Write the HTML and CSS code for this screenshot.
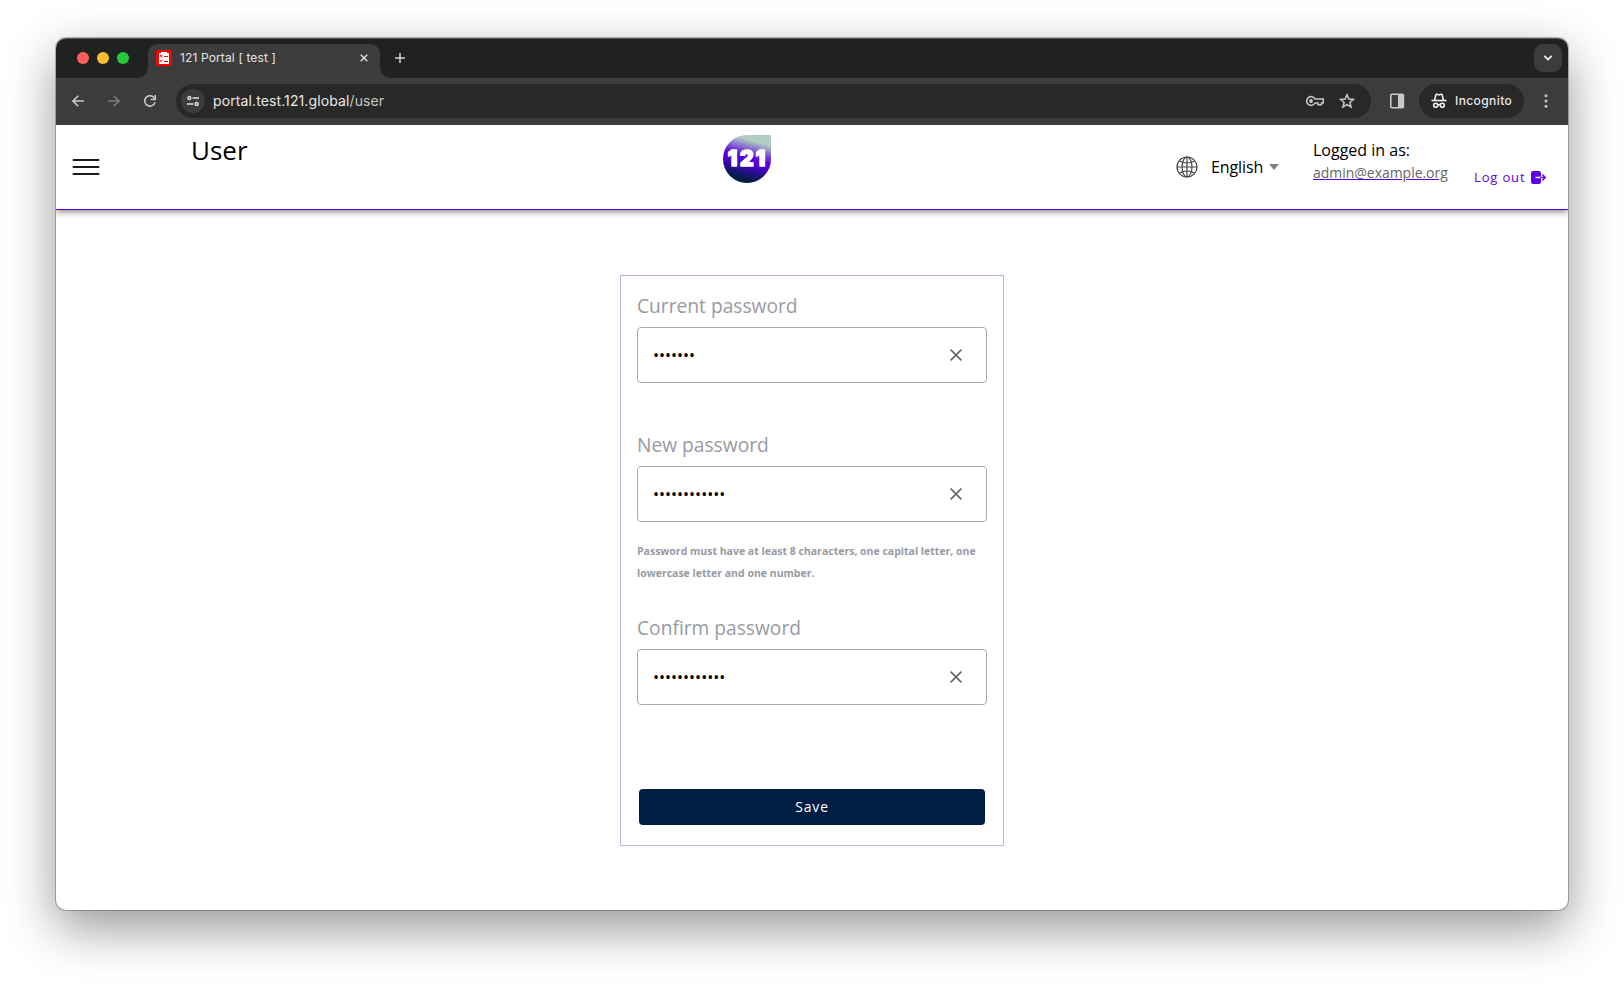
FILE: index.html
```
<!DOCTYPE html>
<html lang="en">
<head>
<meta charset="utf-8">
<title>121 Portal [ test ]</title>
<link rel="stylesheet" href="styles.css">
</head>
<body>
<div class="window">
  <div class="tabstrip">
    <div class="lights"><i class="light red"></i><i class="light yellow"></i><i class="light green"></i></div>
    <div class="tab">
      <svg class="favicon" width="16" height="16" viewBox="0 0 16 16"><rect width="16" height="16" rx="2" fill="#f80000"/><path d="M3 3h2V2h6v1h2v11H3z" fill="#fff"/><path d="M4 5l2.500 2.500M6.500 5L4 7.500M4 10l1 1.500L7 9.500M8 6.500h4M8 11.500h4" fill="none" stroke="#f80000"/></svg>
      <span class="tab-title">121 Portal [ test ]</span>
      <svg class="tab-close" width="8" height="8" viewBox="0 0 8 8"><path d="M.7.7l6.600 6.600M7.300.7L.7 7.300" stroke="#dcdcdc" stroke-width="1.500"/></svg>
    </div>
    <svg class="plus" width="10" height="10" viewBox="0 0 10 10"><path d="M5 0v10M0 5h10" stroke="#d0d0d0" stroke-width="1.500"/></svg>
    <div class="tab-search"><svg width="10" height="6" viewBox="0 0 10 6"><path d="M1.200.8L5 4.500 8.800.8" fill="none" stroke="#eee" stroke-width="1.800"/></svg></div>
  </div>
  <div class="toolbar">
    <svg class="nav" width="12" height="12" viewBox="0 0 12 12"><path d="M12 6H1M6.300.7L1 6l5.300 5.300" fill="none" stroke="#c8c8c8" stroke-width="1.600"/></svg>
    <svg class="nav" width="12" height="12" viewBox="0 0 12 12"><path d="M0 6h11M5.700.7L11 6l-5.300 5.300" fill="none" stroke="#7c7c7c" stroke-width="1.600"/></svg>
    <svg class="nav" width="12" height="12" viewBox="0 0 12 12"><path d="M11 7.200A5.200 5.200 0 1 1 9.900 2.500L11 4" fill="none" stroke="#c8c8c8" stroke-width="1.600"/><path d="M11.250 0v4.500H6.800" fill="none" stroke="#c8c8c8" stroke-width="1.600"/></svg>
    <div class="omnibox">
      <span class="site"><svg width="12" height="12" viewBox="0 0 12 12"><g fill="none" stroke="#dedede" stroke-width="1.400"><circle cx="2.300" cy="3" r="1.500"/><path d="M5.500 3H12M0 9h6.500"/><circle cx="9.700" cy="9" r="1.500"/></g></svg></span>
      <span class="url">portal.test.121.global<span class="path">/user</span></span>
      <svg class="key" width="18" height="12" viewBox="0 0 18 12"><path d="M9 4A4.400 4.400 0 1 0 9 8h3v1.800h3.500V8H17.300V4z" fill="none" stroke="#c8c8c8" stroke-width="1.500"/><circle cx="5" cy="6" r="1.900" fill="#c8c8c8"/></svg>
      <svg class="star" width="16" height="16" viewBox="0 0 16 16"><path d="M8 1.800l1.850 4.200 4.550.4-3.450 3 1.050 4.500L8 11.500l-4 2.400 1.050-4.500-3.450-3 4.550-.4z" fill="none" stroke="#c8c8c8" stroke-width="1.500"/></svg>
    </div>
    <svg class="panel" width="16" height="16" viewBox="0 0 16 16"><rect x="1.800" y="1.300" width="12.600" height="13.400" rx="1" fill="none" stroke="#c8c8c8" stroke-width="1.600"/><path d="M9 2h6v12H9z" fill="#c8c8c8"/></svg>
    <div class="incognito">
      <svg width="16" height="16" viewBox="0 0 16 16"><path d="M.5 7.500h15" stroke="#eee" stroke-width="1.600"/><path d="M3.600 7L4.800 2q.3-1 1.300-.7L8 1.900l1.900-.6q1-.3 1.300.7L12.400 7" fill="none" stroke="#eee" stroke-width="1.600"/><g fill="none" stroke="#eee" stroke-width="1.600"><circle cx="4.700" cy="12.300" r="2"/><circle cx="11.300" cy="12.300" r="2"/><path d="M6.500 12q1.500-1 3 0"/></g></svg>
      <span>Incognito</span>
    </div>
    <svg class="dots" width="4" height="14" viewBox="0 0 4 14"><g fill="#c8c8c8"><circle cx="2" cy="1.800" r="1.500"/><circle cx="2" cy="7" r="1.500"/><circle cx="2" cy="12.200" r="1.500"/></g></svg>
  </div>
  <header class="header">
    <svg class="menu" width="28" height="16" viewBox="0 0 28 16"><path d="M1.500 1h25M1.500 8h25M1.500 15h25" stroke="#1b1b22" stroke-width="2" stroke-linecap="round"/></svg>
    <h1 class="title">User</h1>
    <svg class="logo" width="48" height="48" viewBox="0 0 48 48"><defs><linearGradient id="lg" x1=".64" y1="0" x2=".36" y2="1"><stop offset=".12" stop-color="#afcdc1"/><stop offset=".46" stop-color="#5b00e0"/><stop offset=".58" stop-color="#4d00d4"/><stop offset=".9" stop-color="#001e43"/></linearGradient></defs><path d="M24 0H48V24A24 24 0 1 1 24 0z" fill="url(#lg)"/><g class="logo-text"><text x="9.500" y="30.800" text-anchor="middle">1</text><text x="23.800" y="30.800" text-anchor="middle">2</text><text x="37.500" y="30.800" text-anchor="middle">1</text></g></svg>
    <div class="lang">
      <svg width="22" height="22" viewBox="0 0 22 22"><g fill="none" stroke="#444" stroke-width="1.200"><circle cx="11" cy="11" r="10"/><ellipse cx="11" cy="11" rx="5" ry="10"/><path d="M11 1v20M1 11h20M3.500 5q7.500 4 15 0M3.500 17q7.500-4 15 0"/></g></svg>
      <span class="lang-name">English</span><i class="caret"></i>
    </div>
    <div class="account"><span>Logged in as:</span><a class="email">admin@example.org</a></div>
    <div class="logout"><span>Log out</span><svg width="15" height="13" viewBox="0 0 15 13"><path d="M2.200 0h5.600Q10 0 10 2.200V5.700H4.500v1.600H10v3.500Q10 13 7.800 13H2.200Q0 13 0 10.800V2.200Q0 0 2.200 0z" fill="#5b00e8"/><path d="M9.500 6.500h4.700M11.400 3.500l3 3-3 3" fill="none" stroke="#5b00e8" stroke-width="1.300"/></svg></div>
  </header>
  <main class="main">
    <form class="card">
      <label class="label">Current password</label>
      <div class="field"><span class="pw">•••••••</span><svg class="clear" width="12" height="12" viewBox="0 0 12 12"><path d="M.6.6l10.800 10.800M11.400.6L.6 11.400" stroke="#666" stroke-width="1.700"/></svg></div>
      <label class="label second">New password</label>
      <div class="field"><span class="pw">••••••••••••</span><svg class="clear" width="12" height="12" viewBox="0 0 12 12"><path d="M.6.6l10.800 10.800M11.400.6L.6 11.400" stroke="#666" stroke-width="1.700"/></svg></div>
      <p class="hint">Password must have at least 8 characters, one capital letter, one<br>lowercase letter and one number.</p>
      <label class="label third">Confirm password</label>
      <div class="field"><span class="pw">••••••••••••</span><svg class="clear" width="12" height="12" viewBox="0 0 12 12"><path d="M.6.6l10.800 10.800M11.400.6L.6 11.400" stroke="#666" stroke-width="1.700"/></svg></div>
      <button class="save" type="button">Save</button>
    </form>
  </main>
</div>
</body>
</html>
```

FILE: styles.css
```
* { box-sizing: border-box; }
body { margin: 0; width: 1624px; height: 984px; padding: 38px 56px 0; overflow: hidden; background: #fff; font-family: "Open Sans", sans-serif; color: #000; }
svg { display: block; flex: none; }
.window { width: 1512px; height: 872px; border-radius: 10px; background: #fff; box-shadow: 0 0 0 1px rgba(0,0,0,.25), 0 18px 50px rgba(0,0,0,.42); display: flex; flex-direction: column; }
.tabstrip { height: 40px; flex: none; display: flex; align-items: center; background: #202221; border-radius: 10px 10px 0 0; padding: 0 6px 1px 21px; border-top: 1px solid #555; }
.lights { display: flex; gap: 8px; width: 71px; }
.light { width: 12px; height: 12px; border-radius: 50%; }
.red { background: #ff5f57; }
.yellow { background: #febc2e; }
.green { background: #28c840; }
.tab { position: relative; align-self: flex-end; margin-bottom: -1px; width: 232px; height: 34px; border-radius: 10px 10px 0 0; background: #3c3c3c; display: flex; align-items: center; padding: 0 12px 6px 8px; }
.tab::before, .tab::after { content: ""; position: absolute; bottom: 0; width: 10px; height: 10px; }
.tab::before { left: -10px; background: radial-gradient(circle at 0 0, #202221 9.500px, #3c3c3c 10px); }
.tab::after { right: -10px; background: radial-gradient(circle at 100% 0, #202221 9.500px, #3c3c3c 10px); }
.tab-title { margin-left: 8px; flex: 1; font: 12px/16px Inter, sans-serif; color: #e3e3e3; white-space: nowrap; letter-spacing: .13px; }
.plus { margin-left: 15px; }
.tab-search { margin-left: auto; width: 28px; height: 28px; border-radius: 9px; background: #3c3c3c; display: grid; place-items: center; }
.toolbar { height: 47px; flex: none; background: #3c3c3c; display: flex; align-items: center; padding: 0 20px 1px 16px; }
.nav { margin-right: 24px; }
.omnibox { width: 1195px; height: 34px; margin-left: -4px; border-radius: 17px; background: #282828; display: flex; align-items: center; padding: 0 16px 0 5px; }
.site { width: 24px; height: 24px; border-radius: 50%; background: #3c3c3c; display: grid; place-items: center; }
.url { margin-left: 8px; flex: 1; font: 14px/20px Inter, sans-serif; color: #e8e8e8; letter-spacing: .11px; }
.path { color: #c7c7c7; }
.key { margin-right: 15px; }
.panel { margin-left: 18px; }
.incognito { margin-left: 14px; width: 105px; height: 34px; border-radius: 17px; background: #282828; display: flex; align-items: center; gap: 8px; padding-left: 12px; font: 500 12px/16px Inter, sans-serif; letter-spacing: .4px; color: #e8e8e8; }
.dots { margin-left: auto; }
.header { height: 85px; flex: none; display: flex; align-items: flex-start; border-bottom: 1px solid #5b00e8; box-shadow: 0 2px 6px rgba(0,0,0,.45); clip-path: inset(0 0 -14px 0); padding-left: 16px; }
.menu { margin-top: 34px; }
.title { margin: 7px 0 0 91px; width: 532px; font-size: 26px; line-height: 36px; font-weight: 400; }
.logo { margin-top: 10px; }
.logo-text { font: 900 21px "Inter", sans-serif; fill: #fff; stroke: #fff; stroke-width: 1.600px; stroke-linejoin: round; }
.lang { margin: 31px 0 0 405px; width: 137px; display: flex; align-items: center; font-size: 16px; line-height: 22px; }
.lang-name { margin-left: 13px; letter-spacing: -.1px; }
.caret { margin-left: 6px; border: 5px solid transparent; border-top: 6px solid #808080; border-bottom: 0; }
.account { margin-top: 14px; width: 161px; display: flex; flex-direction: column; font-size: 16px; line-height: 22px; }
.email { font-size: 14px; line-height: 24px; color: #666; text-decoration: underline #5b00e8; letter-spacing: -.03px; }
.logout { margin-top: 42px; display: flex; align-items: center; gap: 6px; font-size: 13px; line-height: 20px; letter-spacing: .85px; color: #5b00e8; }
.main { flex: 1; display: flex; justify-content: center; align-items: flex-start; padding-top: 65px; }
.card { width: 384px; height: 571px; border: 1px solid #aebbd3; padding: 16px; display: flex; flex-direction: column; }
.label { font-size: 19.200px; line-height: 28px; color: #989aa2; margin-bottom: 7px; }
.second { margin-top: 48px; }
.third { margin-top: 30px; }
.field { height: 56px; flex: none; border: 1px solid #aaa; border-radius: 4px; display: flex; align-items: center; justify-content: space-between; padding: 0 24px 0 15px; }
.pw { font: 16px/20px "Open Sans", sans-serif; }
.hint { margin: 18px 0 0; font-size: 10.500px; line-height: 22px; font-weight: 700; color: #989aa2; white-space: nowrap; }
.save { margin: 84px 2px 0; height: 36px; border: 0; border-radius: 4px; background: #001e43; color: #fff; font: 14px/20px "Open Sans", sans-serif; letter-spacing: .85px; }
```
